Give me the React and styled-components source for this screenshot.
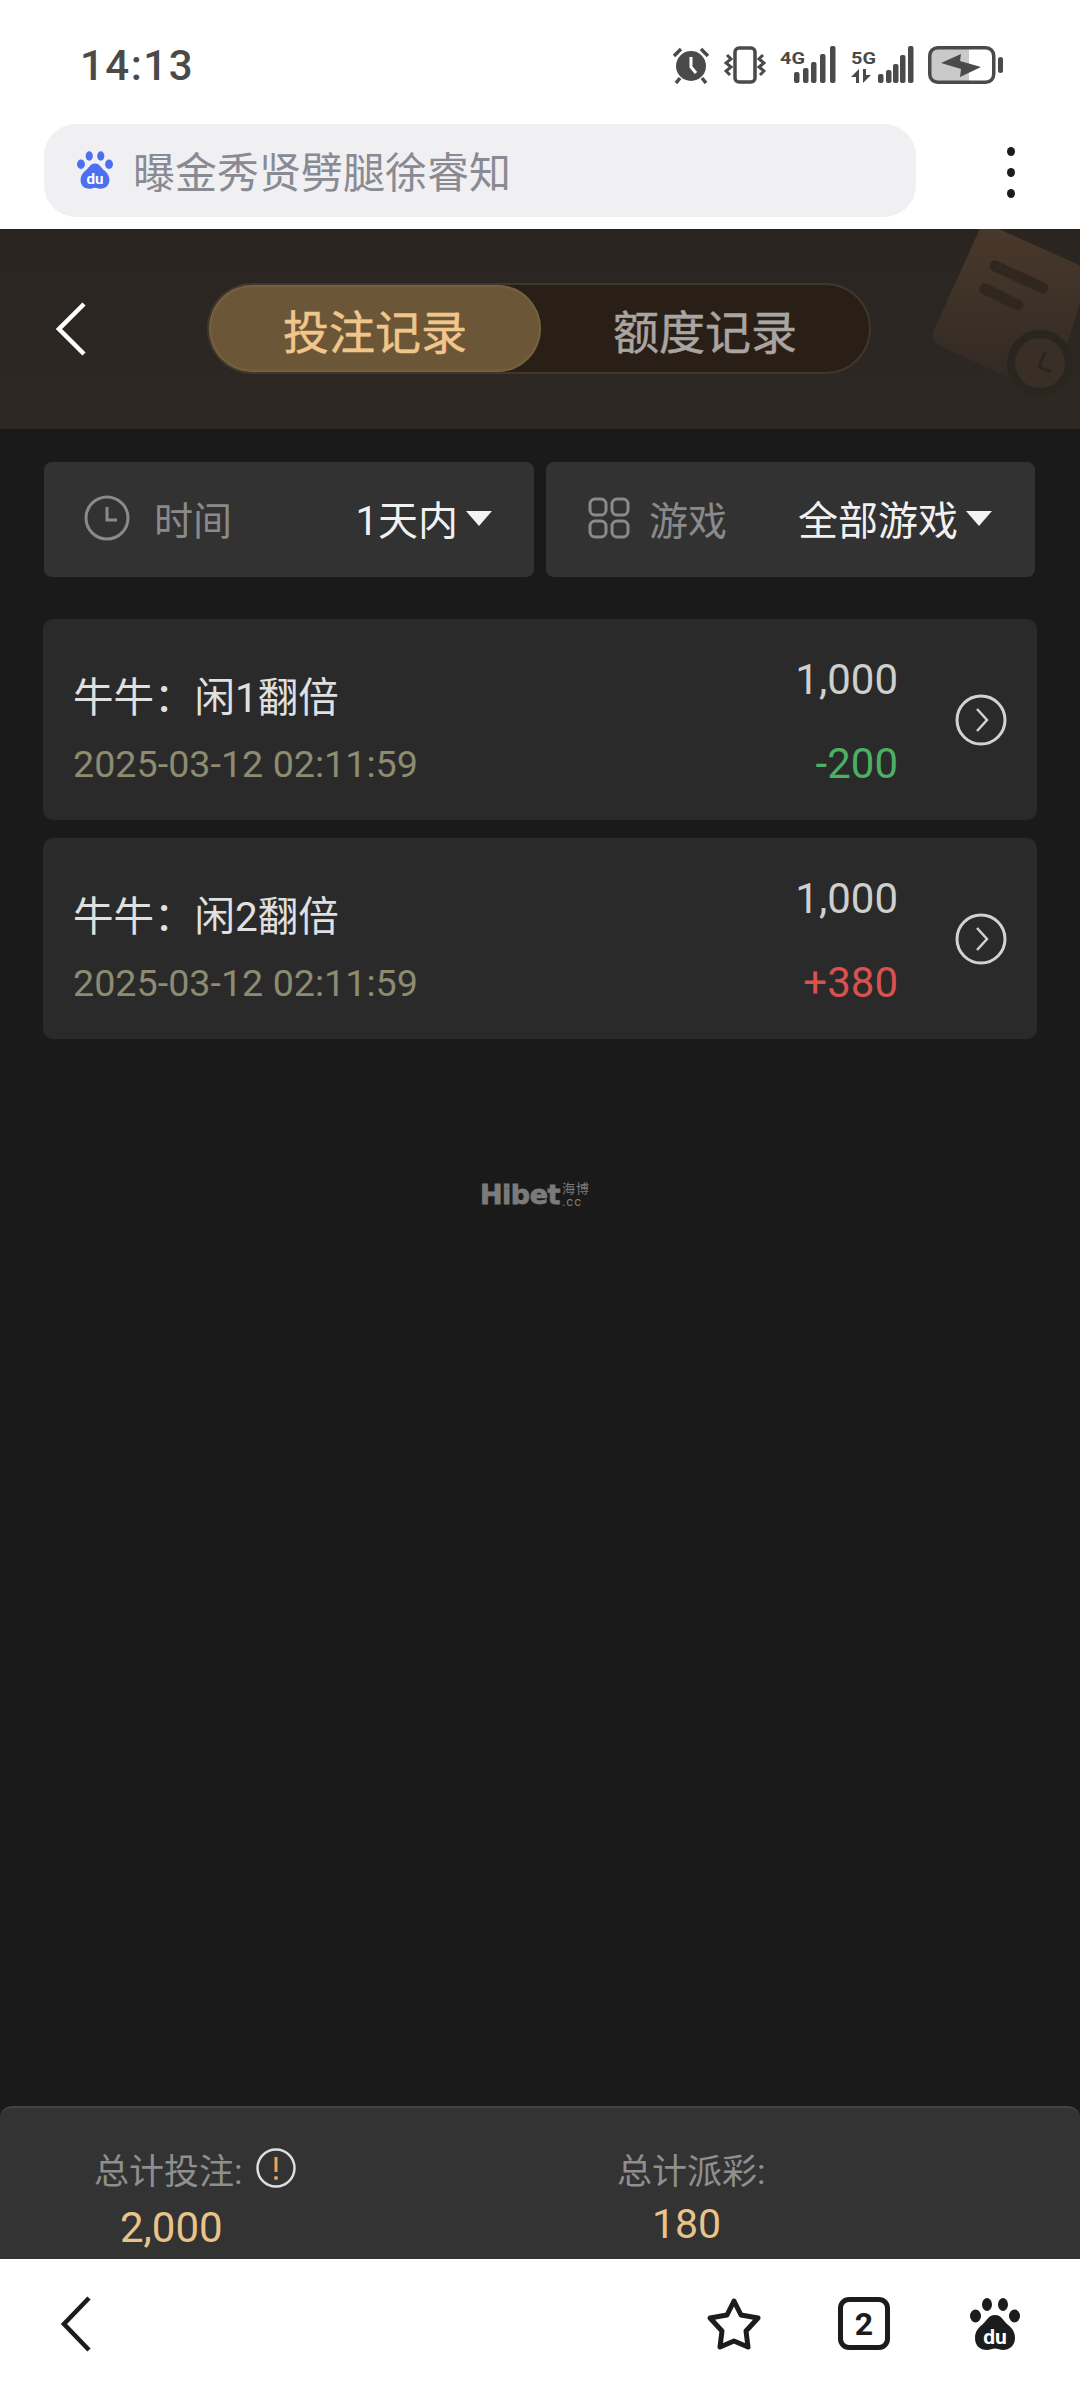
import React from 'react';
import styled, { createGlobalStyle } from 'styled-components';

const GlobalStyle = createGlobalStyle`
  html, body {
    margin: 0;
    padding: 0;
    background: #1a1a1a;
  }
  * {
    box-sizing: border-box;
  }
`;

const FONT = `Roboto, "Noto Sans CJK SC", "Noto Sans", sans-serif`;

const Page = styled.div`
  width: 1080px;
  height: 2388px;
  display: flex;
  flex-direction: column;
  overflow: hidden;
  background: #1a1a1a;
  font-family: ${FONT};
`;

/* phone + browser chrome */
const StatusBar = styled.div`
  height: 124px;
  padding: 6px 77px 0 80px;
  display: flex;
  align-items: center;
  justify-content: space-between;
  background: #fff;
`;

const Clock = styled.span`
  font-size: 42px;
  font-weight: 500;
  letter-spacing: 1.5px;
  color: #4a4a4a;
`;

const StatusIcons = styled.div`
  display: flex;
  align-items: center;
  gap: 14px;
`;

const BrowserBar = styled.div`
  height: 105px;
  padding: 0 44px;
  display: flex;
  align-items: flex-start;
  background: #fff;
`;

const SearchPill = styled.div`
  width: 872px;
  height: 93px;
  padding: 0 0 2px 33px;
  display: flex;
  align-items: center;
  gap: 20px;
  border-radius: 32px;
  background: #f0f0f3;
  font-size: 42px;
  color: #8a8a93;
`;

const MenuDots = styled.div`
  margin: 23px 0 0 91px;
  display: flex;
  flex-direction: column;
  gap: 12px;
`;

const Dot = styled.span`
  width: 8px;
  height: 9px;
  border-radius: 50%;
  background: #1c1c1c;
`;

/* header with the tabs */
const Header = styled.header`
  position: relative;
  height: 200px;
  padding: 54px 0 0 56px;
  display: flex;
  align-items: flex-start;
  overflow: hidden;
  background: linear-gradient(#2b2521, #2e2824);
`;

const HeaderArt = styled.svg`
  position: absolute;
  right: 0;
  top: 0;
`;

const BackButton = styled.svg`
  margin-top: 19px;
  flex: none;
`;

const Tabs = styled.div`
  width: 664px;
  height: 91px;
  margin-left: 121px;
  display: flex;
  border-radius: 46px;
  border: 2px solid #3f362d;
  background: #2a1f17;
`;

const Tab = styled.div`
  width: ${p => (p.$active ? '332px' : '328px')};
  height: 87px;
  display: flex;
  align-items: center;
  justify-content: center;
  border-radius: 44px;
  font-size: 46px;
  -webkit-text-stroke: 0.5px currentColor;
  color: ${p => (p.$active ? '#f0c68c' : '#a8a5a2')};
  background: ${p => (p.$active ? '#6b5637' : 'transparent')};
  box-shadow: ${p => (p.$active ? 'inset 0 0 3px 1px #7f6944' : 'none')};
`;

/* filters */
const Filters = styled.div`
  margin: 33px 45px 0 44px;
  display: grid;
  grid-template-columns: 490px 489px;
  gap: 12px;
`;

const FilterBox = styled.div`
  height: 115px;
  padding: 0 ${p => p.$right}px 3px ${p => p.$left}px;
  display: flex;
  align-items: center;
  border-radius: 8px;
  background: #323232;
`;

const FilterLabel = styled.span`
  margin-left: ${p => p.$gap}px;
  font-size: 39px;
  color: #8a8a8a;
`;

const FilterValue = styled.span`
  margin-left: auto;
  font-size: 40px;
  color: #f1f1f1;
`;

const Caret = styled.span`
  margin-left: 8px;
  width: 0;
  height: 0;
  border-left: 13px solid transparent;
  border-right: 13px solid transparent;
  border-top: 15px solid #f4f4f4;
`;

/* records */
const RecordList = styled.div`
  margin: 42px 43px 0;
  display: flex;
  flex-direction: column;
  gap: 18px;
`;

const RecordCard = styled.div`
  height: 201px;
  padding: 0 30px;
  display: flex;
  border-radius: 10px;
  background: #2a2a2a;
`;

const RecordInfo = styled.div`
  padding-top: 55px;
  flex: 1;
`;

const RecordTitle = styled.div`
  font-size: 40.500px;
  line-height: 48px;
  color: #e0e0e0;
`;

const RecordDate = styled.div`
  margin-top: 20px;
  font-size: 37.700px;
  line-height: 44px;
  color: #8d8b70;
`;

const RecordAmounts = styled.div`
  padding-top: 39px;
  text-align: right;
`;

const Stake = styled.div`
  font-size: 42px;
  line-height: 44px;
  color: #cfcfcf;
`;

const Result = styled.div`
  margin-top: 40px;
  font-size: 42px;
  line-height: 44px;
  color: ${p => (p.$win ? '#d9524f' : '#4caf64')};
`;

const RowArrow = styled.svg`
  margin-left: 57px;
  align-self: center;
  flex: none;
`;

/* watermark */
const Watermark = styled.div`
  margin: 142px 0 0 480px;
  display: flex;
  align-items: flex-end;
  color: #7b7b7b;
  line-height: 1;
`;

const WatermarkName = styled.span`
  font-family: "DejaVu Sans", sans-serif;
  font-size: 27px;
  font-weight: 700;
  letter-spacing: -0.5px;
  -webkit-text-stroke: 0.8px currentColor;
`;

const WatermarkSide = styled.span`
  margin-left: 2px;
  display: flex;
  flex-direction: column;
  font-size: 13px;
  letter-spacing: 1px;
`;

/* summary */
const Summary = styled.footer`
  height: 153px;
  margin-top: auto;
  padding: 38px 0 0 94px;
  display: grid;
  grid-template-columns: 523px 1fr;
  overflow: hidden;
  border-top: 2px solid #444;
  border-radius: 12px 12px 0 0;
  background: #333;
`;

const SummaryLabel = styled.div`
  height: 44px;
  display: flex;
  align-items: center;
  gap: 14px;
  font-size: 35px;
  color: #8f8f8f;
`;

const SummaryValue = styled.div`
  margin: ${p => p.$top}px 0 0 ${p => p.$left}px;
  font-size: ${p => p.$size}px;
  line-height: 48px;
  color: #e8c48a;
`;

/* bottom browser nav */
const BottomNav = styled.nav`
  height: 129px;
  padding: 0 60px 0 61px;
  display: flex;
  align-items: center;
  background: #fff;
`;

const NavItems = styled.div`
  margin-left: auto;
  display: flex;
  align-items: center;
  gap: 76px;
`;

const TabCount = styled.div`
  width: 52px;
  height: 53px;
  display: flex;
  align-items: center;
  justify-content: center;
  border: 5px solid #1c1c1c;
  border-radius: 11px;
  font-size: 32px;
  font-weight: 700;
  color: #1c1c1c;
`;

const PawSlot = styled.div`
  margin-left: 4px;
  display: flex;
`;

const PawIcon = ({ color, width, height }) => (
  <svg width={width} height={height} viewBox="0 0 50 52">
    <ellipse cx="17" cy="6.500" rx="5" ry="6.500" fill={color} />
    <ellipse cx="33" cy="6.500" rx="5" ry="6.500" fill={color} />
    <ellipse cx="5.500" cy="18" rx="5.500" ry="6.500" fill={color} />
    <ellipse cx="44.500" cy="18" rx="5.500" ry="6.500" fill={color} />
    <path
      d="M25 17c6 0 8 5 12 9 4 3 8 7 8 14 0 8-6 12-12 12-3 0-5-1.500-8-1.500S20 52 17 52C10 52 5 48 5 40c0-7 4-11 8-14 4-4 6-9 12-9z"
      fill={color}
    />
    <text x="25" y="46" textAnchor="middle" fontSize="21" fontWeight="700" fontFamily="Roboto, sans-serif" fill="#fff">du</text>
  </svg>
);

const SignalIcon = ({ label, width, bars, children }) => (
  <svg width={width} height="38" viewBox={`0 0 ${width} 38`}>
    <text x="0" y="18" fontSize="17" fontWeight="700" fontFamily="Roboto, sans-serif" fill="#4a4a4a" textLength="25" lengthAdjust="spacingAndGlyphs">{label}</text>
    {bars.map(([x, top]) => (
      <rect key={x} x={x} y={top} width="5.500" height={37 - top} rx="2" fill="#4a4a4a" />
    ))}
    {children}
  </svg>
);

const ChevronCircle = () => (
  <RowArrow width="52" height="52" viewBox="0 0 52 52" fill="none" stroke="#d2d2d2" strokeWidth="3">
    <circle cx="26" cy="26" r="24" />
    <path d="M22 15l10 11-10 11" strokeWidth="2.500" />
  </RowArrow>
);

const records = [
  { name: '牛牛：闲1翻倍', date: '2025-03-12 02:11:59', stake: '1,000', result: '-200', win: false },
  { name: '牛牛：闲2翻倍', date: '2025-03-12 02:11:59', stake: '1,000', result: '+380', win: true },
];

const App = () => (
  <Page>
    <GlobalStyle />
    <StatusBar>
      <Clock>14:13</Clock>
      <StatusIcons>
        <svg width="38" height="38" viewBox="0 0 38 38">
          <circle cx="19" cy="20" r="15" fill="#4a4a4a" />
          <path d="M19 11v10l5 6" fill="none" stroke="#fff" strokeWidth="3" />
          <path d="M2 10l7-7M36 10l-7-7M8 32l-4 5M30 32l4 5" stroke="#4a4a4a" strokeWidth="3.500" fill="none" />
        </svg>
        <svg width="42" height="38" viewBox="0 0 42 38" fill="none" stroke="#4a4a4a">
          <rect x="11" y="2" width="20" height="34" rx="4" strokeWidth="3.500" />
          <path d="M3 9l4 4-5 4 5 4-5 4 4 4M39 9l-4 4 5 4-5 4 5 4-4 4" strokeWidth="3" />
        </svg>
        <SignalIcon label="4G" width="57" bars={[[14, 26], [23, 22], [31, 16], [40, 8], [50, 0]]} />
        <SignalIcon label="5G" width="63" bars={[[27, 28], [35, 24], [42, 18], [49, 9], [57, 0]]}>
          <path d="M8 23L0 31h5v6h3zM12 37l8-8h-5v-6h-3z" fill="#4a4a4a" />
        </SignalIcon>
        <svg width="75" height="38" viewBox="0 0 75 38">
          <rect x="3" y="3" width="38" height="32" fill="#c9c9c9" />
          <rect x="1.750" y="1.750" width="64" height="34.500" rx="8" fill="none" stroke="#4a4a4a" strokeWidth="3.500" />
          <rect x="70" y="11" width="5" height="16" rx="2.500" fill="#4a4a4a" />
          <path d="M13 17L33 8 32 15 53 21 32 31 33 23z" fill="#4a4a4a" />
        </svg>
      </StatusIcons>
    </StatusBar>
    <BrowserBar>
      <SearchPill>
        <PawIcon color="#4b6ff0" width={36} height={38} />
        曝金秀贤劈腿徐睿知
      </SearchPill>
      <MenuDots>
        <Dot />
        <Dot />
        <Dot />
      </MenuDots>
    </BrowserBar>
    <Header>
      <HeaderArt width="147" height="200" viewBox="933 229 147 200">
        <defs>
          <linearGradient id="artFill" x1="0" y1="0" x2="0" y2="1">
            <stop offset="0" stopColor="#4a392b" />
            <stop offset="1" stopColor="#2f2823" />
          </linearGradient>
        </defs>
        <path d="M983 222L1090 270 1050 400 1010 378 941 346Q930 340 934 330z" fill="url(#artFill)" />
        <path d="M995 266l48 22M985 289l33 16" stroke="#30271f" strokeWidth="11" strokeLinecap="round" fill="none" />
        <circle cx="1040" cy="363" r="29" fill="#3a2f27" stroke="#2b2520" strokeWidth="8" />
        <path d="M1045 352l-6 15 12 5" fill="none" stroke="#2b2520" strokeWidth="3" />
      </HeaderArt>
      <BackButton width="30" height="54" viewBox="0 0 30 54" fill="none" stroke="#fff" strokeWidth="4.500">
        <path d="M28 2L3 27l25 25" />
      </BackButton>
      <Tabs>
        <Tab $active>投注记录</Tab>
        <Tab>额度记录</Tab>
      </Tabs>
    </Header>
    <Filters>
      <FilterBox $left={40} $right={42}>
        <svg width="46" height="46" viewBox="0 0 46 46" fill="none" stroke="#8a8a8a" strokeWidth="3">
          <circle cx="23" cy="23" r="21" />
          <path d="M23 12v13h10" />
        </svg>
        <FilterLabel $gap={24}>时间</FilterLabel>
        <FilterValue>1天内</FilterValue>
        <Caret />
      </FilterBox>
      <FilterBox $left={42} $right={43}>
        <svg width="42" height="42" viewBox="0 0 42 42" fill="none" stroke="#8a8a8a" strokeWidth="3">
          <rect x="2" y="2" width="16" height="16" rx="5" />
          <rect x="24" y="2" width="16" height="16" rx="5" />
          <rect x="2" y="24" width="16" height="16" rx="5" />
          <rect x="24" y="24" width="16" height="16" rx="5" />
        </svg>
        <FilterLabel $gap={19}>游戏</FilterLabel>
        <FilterValue>全部游戏</FilterValue>
        <Caret />
      </FilterBox>
    </Filters>
    <RecordList>
      {records.map(record => (
        <RecordCard key={record.name}>
          <RecordInfo>
            <RecordTitle>{record.name}</RecordTitle>
            <RecordDate>{record.date}</RecordDate>
          </RecordInfo>
          <RecordAmounts>
            <Stake>{record.stake}</Stake>
            <Result $win={record.win}>{record.result}</Result>
          </RecordAmounts>
          <ChevronCircle />
        </RecordCard>
      ))}
    </RecordList>
    <Watermark>
      <WatermarkName>Hibet</WatermarkName>
      <WatermarkSide>
        <span>海博</span>
        <span>.cc</span>
      </WatermarkSide>
    </Watermark>
    <Summary>
      <div>
        <SummaryLabel>
          总计投注:
          <svg width="40" height="40" viewBox="0 0 40 40" fill="none">
            <circle cx="20" cy="20" r="18.500" stroke="#dedede" strokeWidth="2.500" />
            <path d="M20 9v15" stroke="#e8a65c" strokeWidth="3" />
            <circle cx="20" cy="30" r="2" fill="#e8a65c" />
          </svg>
        </SummaryLabel>
        <SummaryValue $top={14} $left={26} $size={42}>2,000</SummaryValue>
      </div>
      <div>
        <SummaryLabel>总计派彩:</SummaryLabel>
        <SummaryValue $top={10} $left={35} $size={41}>180</SummaryValue>
      </div>
    </Summary>
    <BottomNav>
      <svg width="30" height="56" viewBox="0 0 30 56" fill="none" stroke="#1c1c1c" strokeWidth="4.500">
        <path d="M28 2L3 28l25 26" />
      </svg>
      <NavItems>
        <svg width="56" height="54" viewBox="0 0 56 54" fill="none" stroke="#1c1c1c" strokeWidth="5" strokeLinejoin="round">
          <path d="M28 4l7 14 17 3-12 13 2 16-14-6-14 6 2-16L4 21l17-3z" />
        </svg>
        <TabCount>2</TabCount>
        <PawSlot>
          <PawIcon color="#1c1c1c" width={50} height={52} />
        </PawSlot>
      </NavItems>
    </BottomNav>
  </Page>
);

export default App;
